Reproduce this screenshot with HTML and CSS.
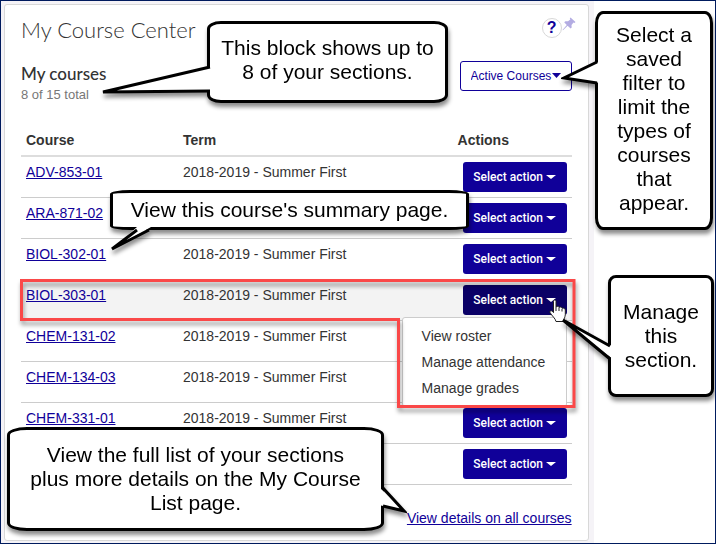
FILE: index.html
```html
<!DOCTYPE html>
<html lang="en">
<head>
  <meta charset="UTF-8" />
  <meta name="viewport" content="width=device-width, initial-scale=1.0" />
  <title>My Course Center</title>
  <link rel="stylesheet" href="styles.css">
</head>
<body>
  <div class="page">
    <main class="main">
      <section class="card">
        <header class="card-header">
          <h1>My Course Center</h1>
          <div class="tools">
            <button class="help" type="button" aria-label="Help">?</button>
            <button class="pin" type="button" aria-label="Pin">
              <svg width="14" height="14" viewBox="0 0 14 14" fill="#b3ace2">
                <path d="M8.5 0.5L13.5 5L12.5 6L11.5 5.6L9.5 8L9.7 10.5L8.6 11.5L5.6 8.8L1 13.2L0.5 13L4.8 7.9L2.2 5.2L3.4 4.2L6 4.3L8.3 2.4L7.8 1.3Z"/>
              </svg>
            </button>
          </div>
        </header>
        <div class="list-header">
          <div>
            <h2>My courses</h2>
            <p class="total">8 of 15 total</p>
          </div>
          <div class="filter">
            <select aria-label="Saved filter">
              <option>Active Courses</option>
            </select>
            <svg class="filter-caret" width="9" height="5" viewBox="0 0 9 5"><path d="M0 0H9L4.5 5Z" fill="#100099"/></svg>
          </div>
        </div>
        <table>
          <thead>
            <tr><th class="course">Course</th><th>Term</th><th class="actions">Actions</th></tr>
          </thead>
          <tbody>
            <tr>
              <td><a href="#">ADV-853-01</a></td>
              <td>2018-2019 - Summer First</td>
              <td class="action"><button class="btn" type="button">Select action <span class="caret"></span></button></td>
            </tr>
            <tr>
              <td><a href="#">ARA-871-02</a></td>
              <td></td>
              <td class="action"><button class="btn" type="button">Select action <span class="caret"></span></button></td>
            </tr>
            <tr>
              <td><a href="#">BIOL-302-01</a></td>
              <td>2018-2019 - Summer First</td>
              <td class="action"><button class="btn" type="button">Select action <span class="caret"></span></button></td>
            </tr>
            <tr class="selected">
              <td><a href="#">BIOL-303-01</a></td>
              <td>2018-2019 - Summer First</td>
              <td class="action">
                <button class="btn open" type="button">Select action <span class="caret"></span></button>
                <ul class="menu">
                  <li><a href="#">View roster</a></li>
                  <li><a href="#">Manage attendance</a></li>
                  <li><a href="#">Manage grades</a></li>
                </ul>
              </td>
            </tr>
            <tr>
              <td><a href="#">CHEM-131-02</a></td>
              <td>2018-2019 - Summer First</td>
              <td class="action"><button class="btn" type="button" aria-label="Select action"></button></td>
            </tr>
            <tr>
              <td><a href="#">CHEM-134-03</a></td>
              <td>2018-2019 - Summer First</td>
              <td class="action"><button class="btn" type="button" aria-label="Select action"></button></td>
            </tr>
            <tr>
              <td><a href="#">CHEM-331-01</a></td>
              <td>2018-2019 - Summer First</td>
              <td class="action"><button class="btn" type="button">Select action <span class="caret"></span></button></td>
            </tr>
            <tr>
              <td></td>
              <td></td>
              <td class="action"><button class="btn" type="button">Select action <span class="caret"></span></button></td>
            </tr>
          </tbody>
        </table>
        <footer class="card-footer">
          <a href="#">View details on all courses</a>
        </footer>
      </section>
    </main>

    <!-- outline round the open row and its menu -->
    <svg class="highlight" width="570" height="140" viewBox="0 0 570 140" fill="none" stroke="#fa4848" stroke-width="3">
      <path d="M5.5 5.5H558V131.5H382.5V44.5H5.5Z"/>
    </svg>

    <svg class="cursor" width="19" height="24" viewBox="0 0 19 24" fill="#fff" stroke="#222" stroke-width="1">
      <path d="M4.5 2.5C4.5 0.5 7 0.5 7 2.5V8C8 7 9.8 7.2 10 8.5C11 7.5 12.8 8 13 9.3C14.5 8.6 16.2 9.3 16.3 11V15.5C16.3 18 14.8 19.5 14.5 22.5H7C6.5 19.5 3 17 1 13.5C0.4 12 2.2 11.2 3.2 12.2L4.5 13.6Z"/>
      <path d="M7 8V12M10 9V12M13 10V12.5" fill="none"/>
    </svg>

    <div class="callout block-note">
      <svg class="tail" width="112" height="34" viewBox="0 0 112 34">
        <path class="fill" d="M112 6L2 31L112 30Z"/>
        <path d="M109 6L2 31L109 30"/>
      </svg>
      <p>This block shows up to<br>8 of your sections.</p>
    </div>
    <div class="callout filter-note">
      <svg class="tail" width="40" height="32" viewBox="0 0 40 32">
        <path class="fill" d="M40 3L3 20L40 25Z"/>
        <path d="M36 4L3 20L36 25"/>
      </svg>
      <p>Select a<br>saved<br>filter to<br>limit the<br>types of<br>courses<br>that<br>appear.</p>
    </div>
    <div class="callout summary-note">
      <svg class="tail" width="44" height="26" viewBox="0 0 44 26">
        <path class="fill" d="M27 0L2 22L41 0Z"/>
        <path d="M27 3L2 22L39 3"/>
      </svg>
      <p>View this course's summary page.</p>
    </div>
    <div class="callout manage-note">
      <svg class="tail" width="53" height="46" viewBox="0 0 53 46">
        <path class="fill" d="M53 29L2 2L53 42Z"/>
        <path d="M49 28L2 2L49 41"/>
      </svg>
      <p>Manage<br>this<br>section.</p>
    </div>
    <div class="callout list-note">
      <svg class="tail" width="28" height="30" viewBox="0 0 28 30">
        <path class="fill" d="M0 3L25 27L0 21Z"/>
        <path d="M4 4L25 27L4 22"/>
      </svg>
      <p>View the full list of your sections<br>plus more details on the My Course<br>List page.</p>
    </div>
  </div>
</body>
</html>
```
FILE: styles.css
```css
* {
  margin: 0;
  padding: 0;
  box-sizing: border-box;
}
body {
  font-family: "Liberation Sans", Arial, sans-serif;
  font-size: 14px;
  line-height: 20px;
  color: #333;
  background: #fff;
}

.page {
  position: relative;
  min-height: 100vh;
  border: 1px solid #001b5e;
  overflow: hidden;
}

.main {
  width: 83%;
  padding: 3px 5px 2px 3px;
  background: #f5f3f7;
}

.card {
  padding: 12px 16px;
  background: #fff;
  border: 1px solid #d8d8d8;
  border-radius: 3px;
}

.card-header,
.list-header {
  display: flex;
  justify-content: space-between;
  align-items: flex-start;
}

h1 {
  font-family: Lato, sans-serif;
  font-size: 22px;
  font-weight: 300;
  line-height: 26px;
}

.tools {
  display: flex;
  align-items: flex-start;
  margin-right: -2px;
}

.help {
  width: 20px;
  height: 20px;
  margin-top: 1px;
  font: bold 16px/18px "Liberation Sans", Arial, sans-serif;
  color: #100099;
  background: #fff;
  border: 1px solid #d8d8d8;
  border-radius: 50%;
}

.pin {
  width: 12px;
  height: 14px;
  background: none;
  border: none;
}

.pin svg {
  display: block;
}

.list-header {
  margin-top: 18px;
}

h2 {
  font-family: Lato, sans-serif;
  font-size: 17px;
  font-weight: 500;
  line-height: 26px;
}

.total {
  font-size: 13px;
  line-height: 16px;
  color: #777;
}

.filter {
  position: relative;
}

.filter select {
  width: 112px;
  height: 30px;
  padding: 0 10px;
  appearance: none;
  font: 12px "Liberation Sans", Arial, sans-serif;
  color: #100099;
  background: #fff;
  border: 1px solid #100099;
  border-radius: 3px;
}

.filter-caret {
  position: absolute;
  top: 12px;
  right: 11px;
}

table {
  width: 100%;
  margin-top: 20px;
  table-layout: fixed;
  border-collapse: separate;
  border-spacing: 0;
}

th {
  padding: 7px 5px 5px;
  text-align: left;
  border-bottom: 2px solid #ddd;
}

th.course {
  width: 157px;
}

th.actions {
  width: 119px;
}

td {
  height: 41px;
  padding: 5px;
  vertical-align: top;
  border-bottom: 1px solid #ccc;
}

a {
  color: #100099;
}

.selected td {
  background: #f3f3f3;
}

.action {
  position: relative;
  text-align: right;
}

.btn {
  display: inline-flex;
  align-items: center;
  justify-content: center;
  gap: 3px;
  width: 104px;
  height: 30px;
  font: 500 12px Roboto, sans-serif;
  color: #fff;
  background: #100099;
  border: none;
  border-radius: 3px;
  vertical-align: top;
}

.btn.open {
  background: #0a0066;
}

.caret {
  border-top: 4px solid #fff;
  border-left: 5px solid transparent;
  border-right: 5px solid transparent;
}

.menu {
  position: absolute;
  top: 37px;
  right: 5px;
  z-index: 1;
  width: 165px;
  padding: 5px 0;
  list-style: none;
  text-align: left;
  background: #fff;
  border: 1px solid #ccc;
  border-radius: 3px;
}

.menu a {
  display: block;
  padding: 3px 19px;
  color: #333;
  text-decoration: none;
}

.card-footer {
  padding: 23px 0 0;
  text-align: right;
}

/* notes laid over the page */
.highlight,
.cursor,
.callout,
.tail {
  position: absolute;
}

.highlight {
  top: 274px;
  left: 15px;
  z-index: 2;
  filter: drop-shadow(1px 4px 2px rgba(0, 0, 0, 0.4));
}

.cursor {
  top: 298px;
  left: 548px;
  z-index: 3;
}

.callout {
  z-index: 4;
  display: flex;
  align-items: center;
  justify-content: center;
  font-size: 21px;
  line-height: 24px;
  text-align: center;
  color: #000;
  background: #fff;
  border: 3px solid #000;
  border-radius: 14px / 8px;
  filter: drop-shadow(1px 4px 2px rgba(0, 0, 0, 0.45));
}

.callout p {
  white-space: nowrap;
}

.tail {
  fill: none;
  stroke: #000;
  stroke-width: 3;
}

.tail .fill {
  fill: #fff;
  stroke: none;
}

.block-note {
  top: 20px;
  left: 206px;
  width: 241px;
  height: 82px;
  padding-bottom: 4px;
}

.block-note .tail {
  top: 37px;
  left: -109px;
}

.filter-note {
  top: 10px;
  left: 594px;
  width: 118px;
  height: 219px;
  padding-bottom: 4px;
  border-radius: 8px / 12px;
}

.filter-note .tail {
  top: 44px;
  left: -37px;
}

.summary-note {
  top: 189px;
  left: 109px;
  width: 359px;
  height: 40px;
  border-radius: 20px / 4px;
}

.summary-note .tail {
  top: 34px;
  left: -3px;
}

.manage-note {
  top: 274px;
  left: 607px;
  width: 106px;
  height: 122px;
  border-radius: 8px;
}

.manage-note .tail {
  top: 40px;
  left: -50px;
}

.list-note {
  top: 426px;
  left: 6px;
  width: 377px;
  height: 104px;
  border-radius: 20px / 8px;
}

.list-note .tail {
  top: 54px;
  right: -26px;
}
```
